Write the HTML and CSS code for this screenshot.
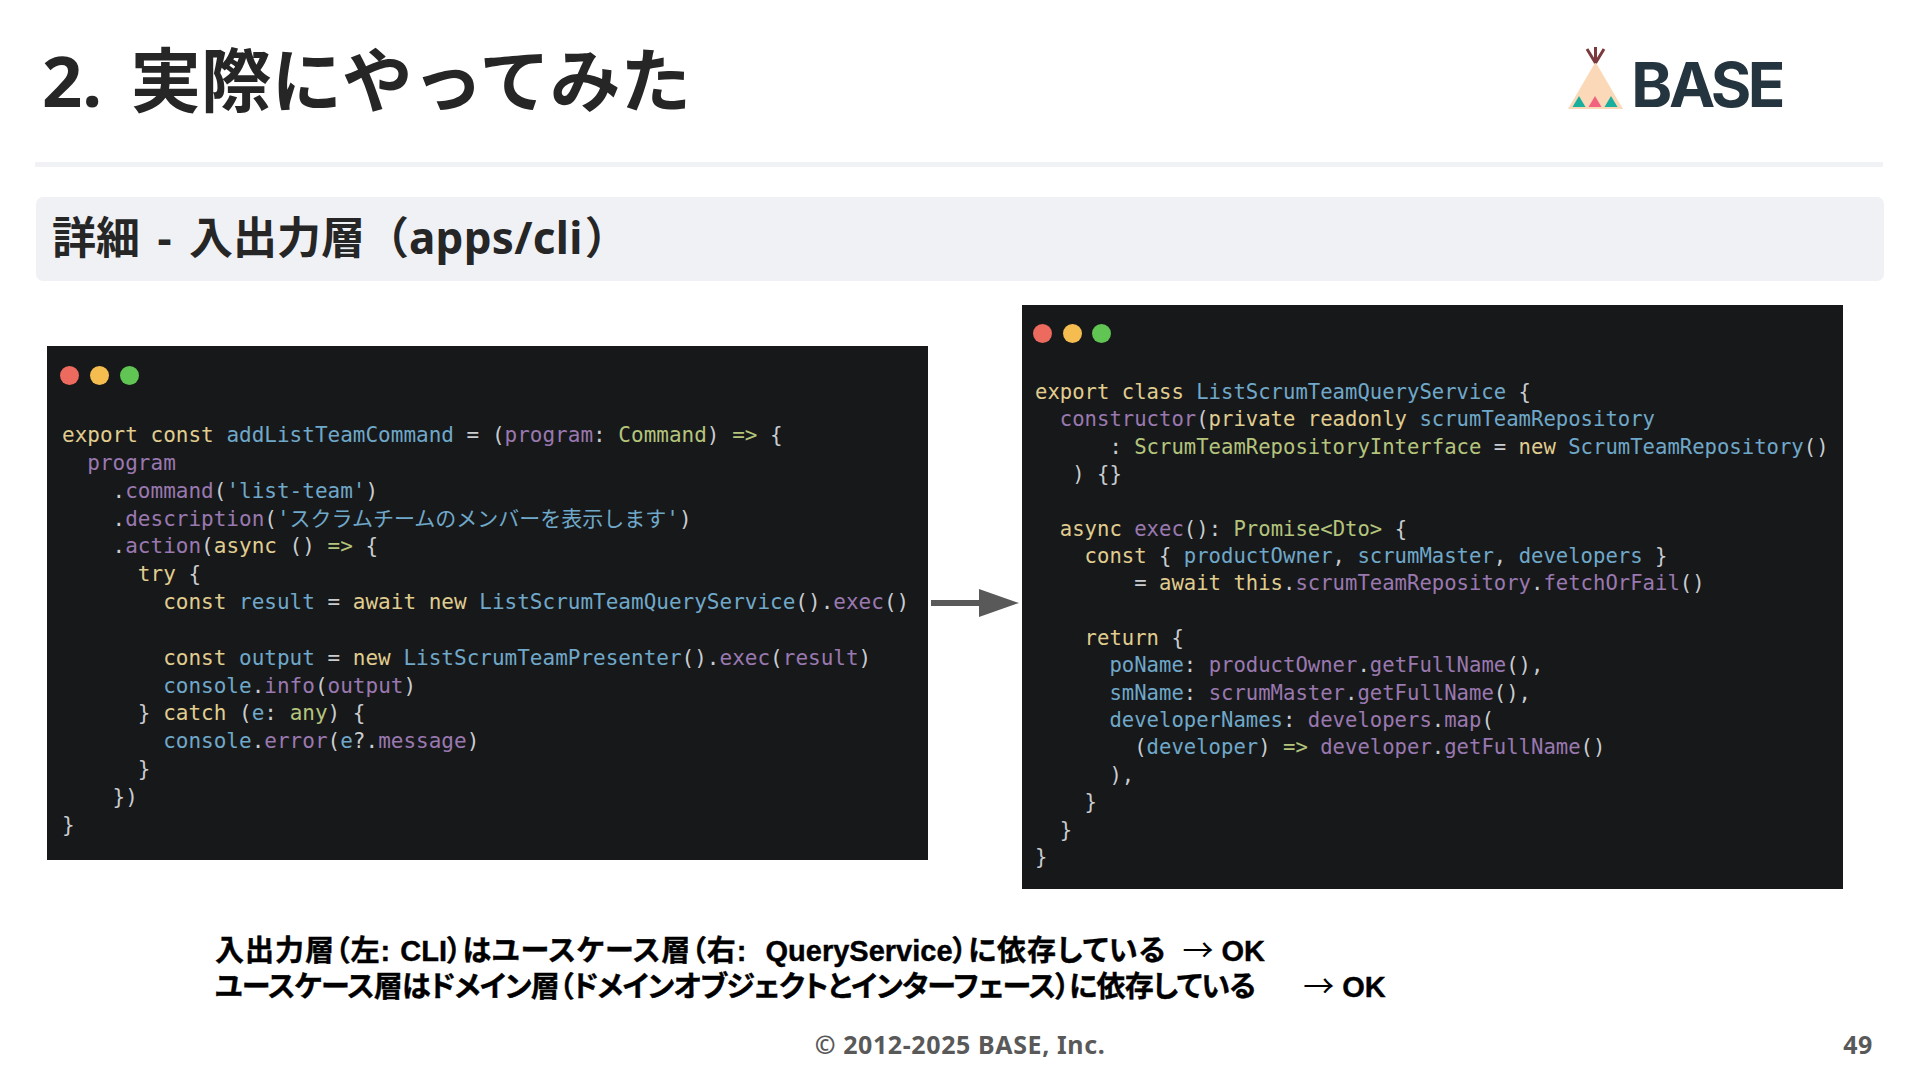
FILE: index.html
```html
<!DOCTYPE html>
<html lang="ja">
<head>
<meta charset="utf-8">
<title>2. 実際にやってみた</title>
<link rel="stylesheet" href="styles.css">
</head>
<body>
<div class="slide">
  <header class="top">
    <h1 class="title">2. 実際にやってみた</h1>
    <div class="logo">
      <svg class="tipi" width="60" height="66" viewBox="0 0 60 66">
        <path d="M27.500 19 L55 66 H0 Z" fill="#fbd9b8"/>
        <path d="M27.500 20 L27.500 4 M27.500 20 L19 6 M27.500 20 L36 6" stroke="#7a3a3e" stroke-width="3" fill="none"/>
        <path d="M11 53 L17.500 64 H4.500 Z" fill="#1aae9f"/>
        <path d="M27 53 L33.500 64 H20.500 Z" fill="#f2617f"/>
        <path d="M43 53 L49.500 64 H36.500 Z" fill="#1aae9f"/>
      </svg>
      <span class="logo-text">BASE</span>
    </div>
  </header>
  <div class="rule"></div>
  <h2 class="section">詳細 - 入出力層（<span class="lat">apps/cli</span>）</h2>
  <div class="flow">
    <div class="code code-left">
      <div class="dots"><i class="dot r"></i><i class="dot y"></i><i class="dot g"></i></div>
      <div class="src">
        <div class="l"><span class="k">export const</span> <span class="b">addListTeamCommand</span> = (<span class="p">program</span>: <span class="n">Command</span>) <span class="n">=&gt;</span> {</div>
        <div class="l">  <span class="p">program</span></div>
        <div class="l">    .<span class="p">command</span>(<span class="b">'list-team'</span>)</div>
        <div class="l">    .<span class="p">description</span>(<span class="b">'スクラムチームのメンバーを表示します'</span>)</div>
        <div class="l">    .<span class="p">action</span>(<span class="k">async</span> () <span class="n">=&gt;</span> {</div>
        <div class="l">      <span class="k">try</span> {</div>
        <div class="l">        <span class="k">const</span> <span class="b">result</span> = <span class="k">await new</span> <span class="b">ListScrumTeamQueryService</span>().<span class="p">exec</span>()</div>
        <div class="l"></div>
        <div class="l">        <span class="k">const</span> <span class="b">output</span> = <span class="k">new</span> <span class="b">ListScrumTeamPresenter</span>().<span class="p">exec</span>(<span class="p">result</span>)</div>
        <div class="l">        <span class="b">console</span>.<span class="p">info</span>(<span class="p">output</span>)</div>
        <div class="l">      } <span class="k">catch</span> (<span class="b">e</span>: <span class="n">any</span>) {</div>
        <div class="l">        <span class="b">console</span>.<span class="p">error</span>(<span class="b">e</span>?.<span class="p">message</span>)</div>
        <div class="l">      }</div>
        <div class="l">    })</div>
        <div class="l">}</div>
      </div>
    </div>
    <svg class="arrow" width="88" height="30" viewBox="0 0 88 30">
      <path d="M0 12 H48 V1 L88 15 L48 29 V18 H0 Z" fill="#595959"/>
    </svg>
    <div class="code code-right">
      <div class="dots"><i class="dot r"></i><i class="dot y"></i><i class="dot g"></i></div>
      <div class="src">
        <div class="l"><span class="k">export class</span> <span class="b">ListScrumTeamQueryService</span> {</div>
        <div class="l">  <span class="p">constructor</span>(<span class="k">private readonly</span> <span class="b">scrumTeamRepository</span></div>
        <div class="l">      : <span class="n">ScrumTeamRepositoryInterface</span> = <span class="k">new</span> <span class="b">ScrumTeamRepository</span>()</div>
        <div class="l">   ) {}</div>
        <div class="l"></div>
        <div class="l">  <span class="k">async</span> <span class="p">exec</span>(): <span class="n">Promise&lt;Dto&gt;</span> {</div>
        <div class="l">    <span class="k">const</span> { <span class="b">productOwner</span>, <span class="b">scrumMaster</span>, <span class="b">developers</span> }</div>
        <div class="l">        = <span class="k">await this</span>.<span class="p">scrumTeamRepository</span>.<span class="p">fetchOrFail</span>()</div>
        <div class="l"></div>
        <div class="l">    <span class="k">return</span> {</div>
        <div class="l">      <span class="b">poName</span>: <span class="p">productOwner</span>.<span class="p">getFullName</span>(),</div>
        <div class="l">      <span class="b">smName</span>: <span class="p">scrumMaster</span>.<span class="p">getFullName</span>(),</div>
        <div class="l">      <span class="b">developerNames</span>: <span class="p">developers</span>.<span class="p">map</span>(</div>
        <div class="l">        (<span class="b">developer</span>) <span class="n">=&gt;</span> <span class="p">developer</span>.<span class="p">getFullName</span>()</div>
        <div class="l">      ),</div>
        <div class="l">    }</div>
        <div class="l">  }</div>
        <div class="l">}</div>
      </div>
    </div>
  </div>
  <div class="notes">
    <p class="note note-a">入出力層（左: <span class="lat-n">CLI</span>）はユースケース層（右:  <span class="lat-n">QueryService</span>）に依存している<span class="gap-a"></span><span class="arr">→</span><span class="lat-n"> OK</span></p>
    <p class="note note-b">ユースケース層はドメイン層（ドメインオブジェクトとインターフェース）に依存している<span class="gap"></span><span class="arr">→</span><span class="lat-n"> OK</span></p>
  </div>
  <footer class="foot">
    <span class="copy">© 2012-2025 BASE, Inc.</span>
    <span class="page">49</span>
  </footer>
</div>
</body>
</html>
```
FILE: styles.css
```css
* { box-sizing: border-box; }
html, body { margin: 0; padding: 0; background: #fff; }
.slide {
  width: 1920px;
  height: 1080px;
  overflow: hidden;
  display: flex;
  flex-direction: column;
  font-family: "Noto Sans", "Noto Sans CJK JP", sans-serif;
  color: #262626;
}
.top {
  height: 162px;
  padding: 0 138px 0 42px;
  display: flex;
  justify-content: space-between;
  align-items: flex-start;
}
.title {
  margin: 33px 0 0;
  font-size: 70.500px;
  line-height: 94px;
  font-weight: 700;
  white-space: nowrap;
  word-spacing: 10px;
}
.logo {
  margin-top: 43px;
  display: flex;
  align-items: flex-end;
  gap: 3px;
}
.logo-text {
  font-family: Inter, sans-serif;
  font-weight: 700;
  font-size: 62px;
  line-height: 60px;
  color: #25353f;
  letter-spacing: -3.500px;
  margin-bottom: -6px;
}
.rule {
  height: 5px;
  margin: 0 37px 0 35px;
  background: #f1f2f5;
}
.section {
  margin: 30px 36px 0 36px;
  height: 84px;
  padding-left: 16px;
  background: #eff1f5;
  border-radius: 7px;
  font-size: 44px;
  line-height: 80px;
  font-weight: 700;
  color: #262626;
  word-spacing: 6px;
}
.lat { letter-spacing: 0.300px; margin-right: 2px; }
.flow {
  display: flex;
  align-items: flex-start;
  margin-top: 24px;
  height: 584px;
  padding-left: 47px;
}
.code {
  background: #17181a;
  color: #c9ccd0;
}
.src {
  font-family: "DejaVu Sans Mono", "Noto Sans CJK JP", monospace;
}
.l { white-space: pre; }
.code-left {
  width: 881px;
  height: 514px;
  margin-top: 41px;
  padding: 20px 0 0 15px;
}
.code-left .src { font-size: 21px; margin-top: 37px; }
.code-left .l { height: 27.850px; line-height: 27.850px; }
.code-right {
  width: 821px;
  height: 584px;
  padding: 19px 0 0 13px;
}
.code-right .src { font-size: 20.600px; margin-top: 36px; }
.code-right .l { height: 27.350px; line-height: 27.350px; }
.dots { display: flex; gap: 11px; }
.code-right .dots { gap: 10.500px; margin-left: -2px; }
.code-left .dots { margin-left: -2px; }
.dot { width: 19px; height: 19px; border-radius: 50%; display: block; }
.dot.r { background: #ed6a5e; }
.dot.y { background: #f5bd4f; }
.dot.g { background: #61c554; }
.k { color: #e0cd8f; }
.b { color: #6fa8c9; }
.p { color: #9a78b0; }
.n { color: #b4c47c; }
.arrow {
  margin: 283px 3px 0 3px;
  flex: none;
}
.notes {
  margin-top: 43px;
  padding-left: 215px;
}
.note {
  margin: 0;
  height: 35.500px;
  font-family: "Liberation Sans", "Noto Sans CJK JP", sans-serif;
  font-size: 29px;
  line-height: 35.500px;
  font-weight: 700;
  color: #000;
  white-space: pre;
  font-feature-settings: "palt";
  -webkit-text-stroke: 0.400px #000;
}
.note-a { letter-spacing: 1px; }
.note-b { letter-spacing: -0.750px; }
.lat-n { font-size: 29px; letter-spacing: 0; }
.arr {
  font-family: "Noto Sans CJK JP", sans-serif;
  font-feature-settings: normal;
  font-size: 31px;
  line-height: 1;
  font-weight: 400;
  letter-spacing: 0;
  -webkit-text-stroke: 0;
}
.gap-a { display: inline-block; width: 16px; }
.gap { display: inline-block; width: 48px; }
.foot {
  position: relative;
  margin-top: 23px;
  height: 36px;
  text-align: center;
  font-size: 25px;
  line-height: 36px;
  font-weight: 700;
  color: #595959;
  letter-spacing: 0.600px;
}
.page { position: absolute; right: 47px; top: 0; }
```
